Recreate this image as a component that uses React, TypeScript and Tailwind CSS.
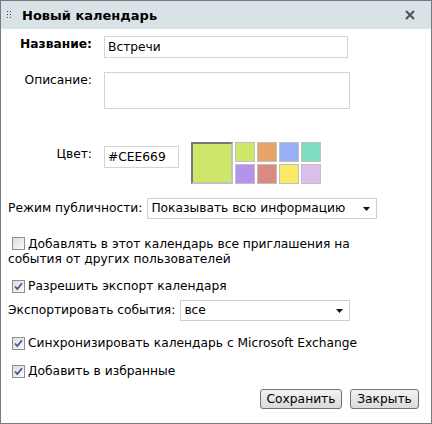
import React from 'react';

const font = { fontFamily: '"DejaVu Sans", Verdana, sans-serif' };

const Check: React.FC<{ checked?: boolean }> = ({ checked }) => (
  <span className="relative inline-block w-[13px] h-[13px] shrink-0 border border-[#8e8f8f] bg-gradient-to-br from-[#dcdcdc] to-[#fbfbfb]">
    {checked && (
      <svg viewBox="0 0 11 11" className="absolute inset-0 w-[11px] h-[11px]">
        <path d="M2 5.5 L4.3 8 L9 2.2" fill="none" stroke="#4a5a8a" strokeWidth="1.8" />
      </svg>
    )}
  </span>
);

const Select: React.FC<{ value: string; className: string }> = ({ value, className }) => (
  <div className={`flex items-center justify-between h-[21px] border border-[#cfcfcf] bg-white pl-[3px] pr-[6px] ${className}`}>
    <span>{value}</span>
    <svg viewBox="0 0 7 4" className="w-[7px] h-[4px]">
      <path d="M0 0 H7 L3.5 4 Z" fill="#111" />
    </svg>
  </div>
);

const swatches = ['#cee669', '#e6a469', '#98aff6', '#7fddc1', '#b592ec', '#d98b82', '#f9e966', '#dcc0eb'];

export default function App() {
  return (
    <div style={font} className="w-[432px] h-[424px] border border-[#7a7a7a] bg-white text-[12.25px] text-black leading-[15px] flex flex-col">
      <div className="h-[28px] bg-[#d8e2e7] flex items-center pl-[6px] pr-[16px] shrink-0">
        <svg viewBox="0 0 5 9" className="w-[5px] h-[9px] mr-[10px]">
          {[0, 3, 6].map(y => (
            <g key={y}>
              <rect x="0" y={y} width="1" height="1" fill="#444" />
              <rect x="3" y={y} width="1" height="1" fill="#444" />
            </g>
          ))}
        </svg>
        <span className="font-bold text-[13px]">Новый календарь</span>
        <svg viewBox="0 0 10 10" className="ml-auto w-[10px] h-[10px]">
          <path d="M1 1 L9 9 M9 1 L1 9" stroke="#555" strokeWidth="2.2" />
        </svg>
      </div>

      <div className="grid grid-cols-[91px_1fr] gap-x-[12px] mt-[7px] items-start">
        <label className="font-bold text-right pt-[1px]">Название:</label>
        <input
          readOnly
          value="Встречи"
          style={font}
          className="w-[244px] h-[22px] border border-[#d4d4d4] px-[3px] text-[12.25px] outline-none"
        />

        <label className="text-right mt-[15px]">Описание:</label>
        <textarea
          readOnly
          style={font}
          className="mt-[14px] w-[246px] h-[37px] border border-[#d4d4d4] resize-none outline-none"
        />

        <label className="text-right mt-[38px]">Цвет:</label>
        <div className="mt-[33px] flex items-start gap-[12px]">
          <input
            readOnly
            value="#CEE669"
            style={font}
            className="mt-[4px] w-[75px] h-[22px] border border-[#d4d4d4] px-[3px] text-[12.25px] outline-none"
          />
          <div className="flex gap-[2px]">
            <div className="w-[42px] h-[42px] border-2 border-t-[#777] border-l-[#777] border-b-[#c2c2c2] border-r-[#c2c2c2] bg-[#cee669]" />
            <div className="grid grid-cols-4 gap-[2px]">
              {swatches.map(c => (
                <div key={c} className="w-[20px] h-[20px] border border-[#c0c0c0]" style={{ backgroundColor: c }} />
              ))}
            </div>
          </div>
        </div>
      </div>

      <div className="flex items-center mt-[14px] pl-[7px]">
        <span className="mr-[5px]">Режим публичности:</span>
        <Select value="Показывать всю информацию" className="w-[230px]" />
      </div>

      <div className="mt-[18px] pl-[7px] pr-[60px] leading-[13px]">
        <label className="inline">
          <span className="inline-block align-[-2px] ml-[4px] mr-[3px]"><Check /></span>
          Добавлять в этот календарь все приглашения на события от других пользователей
        </label>
      </div>

      <div className="mt-[13px] pl-[11px] flex items-center gap-[3px]">
        <Check checked />
        <span>Разрешить экспорт календаря</span>
      </div>

      <div className="flex items-center mt-[6px] pl-[7px]">
        <span className="mr-[5px]">Экспортировать события:</span>
        <Select value="все" className="w-[170px]" />
      </div>

      <div className="mt-[15px] pl-[11px] flex items-center gap-[3px]">
        <Check checked />
        <span>Синхронизировать календарь с Microsoft Exchange</span>
      </div>

      <div className="mt-[13px] pl-[11px] flex items-center gap-[3px]">
        <Check checked />
        <span>Добавить в избранные</span>
      </div>

      <div className="mt-[10px] flex justify-end gap-[8px] pr-[12px]">
        <button style={font} className="h-[20px] w-[82px] border border-[#707070] rounded-[3px] bg-gradient-to-b from-[#f3f3f3] to-[#dadada] text-[12.25px]">Сохранить</button>
        <button style={font} className="h-[20px] w-[69px] border border-[#707070] rounded-[3px] bg-gradient-to-b from-[#f3f3f3] to-[#dadada] text-[12.25px]">Закрыть</button>
      </div>
    </div>
  );
}
